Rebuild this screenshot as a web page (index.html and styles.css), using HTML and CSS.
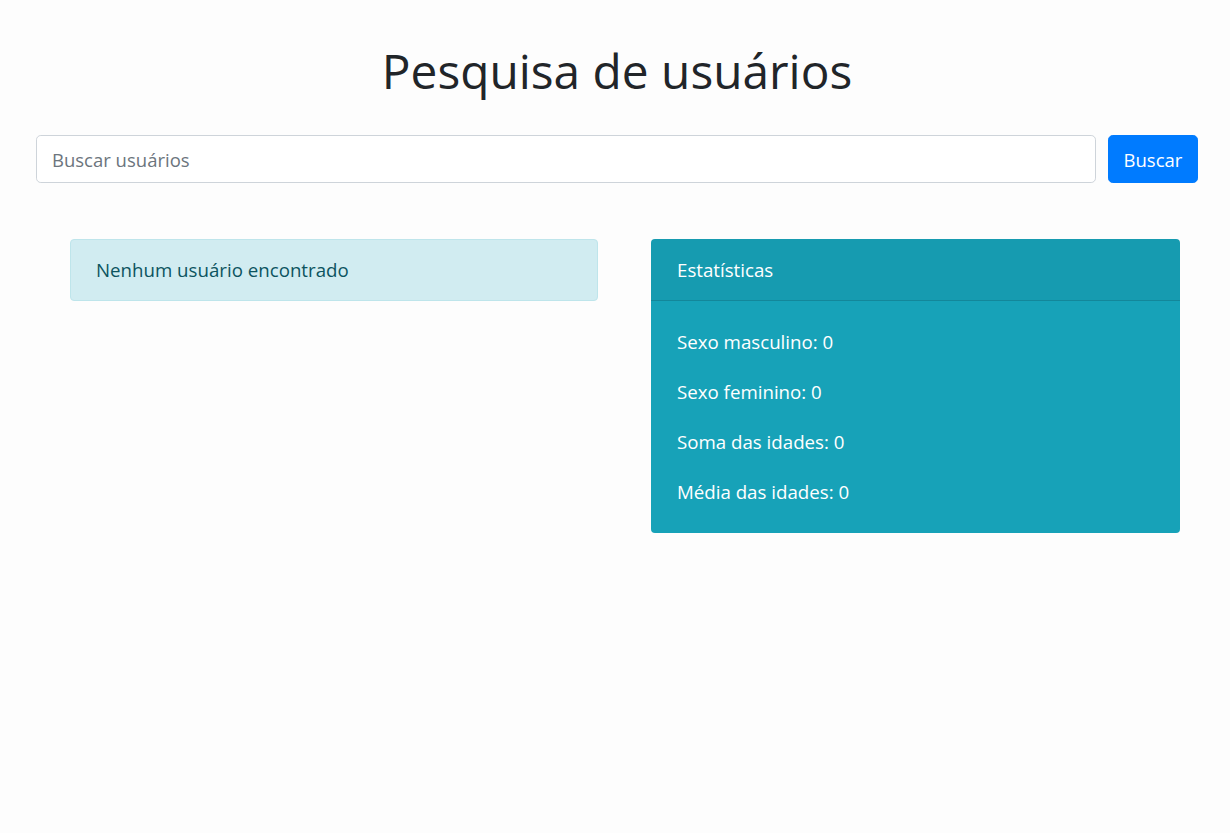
FILE: index.html
```html
<!DOCTYPE html>
<html lang="pt-BR">
<head>
<meta charset="utf-8">
<title>Pesquisa de usuários</title>
<link rel="stylesheet" href="styles.css">
</head>
<body>
<div class="page">
  <h1 class="title">Pesquisa de usuários</h1>
  <form class="search" onsubmit="return false">
    <input class="search-input" type="text" placeholder="Buscar usuários">
    <button class="search-btn" type="submit">Buscar</button>
  </form>
  <div class="results">
    <div class="col">
      <div class="alert">Nenhum usuário encontrado</div>
    </div>
    <div class="col">
      <div class="card">
        <div class="card-header">Estatísticas</div>
        <div class="card-body">
          <p>Sexo masculino: 0</p>
          <p>Sexo feminino: 0</p>
          <p>Soma das idades: 0</p>
          <p>Média das idades: 0</p>
        </div>
      </div>
    </div>
  </div>
</div>
</body>
</html>
```

FILE: styles.css
```css
* { box-sizing: border-box; }
html, body { margin: 0; padding: 0; }
body {
  background: #fdfdfd;
  color: #212529;
  font-family: "Open Sans", "Noto Sans", sans-serif;
  font-size: 16px;
  line-height: 1.5;
}
.page {
  padding: 36px 32px 0 36px;
}
.title {
  margin: 0 0 30px;
  text-align: center;
  font-size: 47.8px;
  font-weight: 500;
  line-height: 69px;
  color: #212529;
}
.search {
  display: flex;
  gap: 12px;
  margin: 0;
}
.search-input {
  flex: 1;
  height: 48px;
  padding: 8px 15px;
  font-family: inherit;
  font-size: 18.5px;
  color: #495057;
  background: #fff;
  border: 1px solid #ced4da;
  border-radius: 4.8px;
  outline: none;
}
.search-input::placeholder { color: #6c757d; }
.search-btn {
  width: 90px;
  height: 48px;
  padding: 0;
  font-family: inherit;
  font-size: 18.5px;
  color: #fff;
  background: #007bff;
  border: 1px solid #007bff;
  border-radius: 4.8px;
}
.results {
  display: grid;
  grid-template-columns: 528fr 529fr;
  gap: 53px;
  margin: 56px 18px 0 34px;
  align-items: start;
}
.col { min-width: 0; }
.alert {
  padding: 15px 25px;
  font-size: 18.7px;
  line-height: 30px;
  color: #0c5460;
  background: #d1ecf1;
  border: 1px solid #bee5eb;
  border-radius: 4px;
}
.card {
  background: #17a2b8;
  color: #fff;
  border-radius: 4px;
  overflow: hidden;
}
.card-header {
  padding: 16px 26px 15px;
  font-size: 18.7px;
  line-height: 30px;
  background: rgba(0, 0, 0, 0.04);
  border-bottom: 1px solid rgba(0, 0, 0, 0.125);
}
.card-body {
  padding: 26px 26px 26px;
  font-size: 18.7px;
  line-height: 30px;
}
.card-body p { margin: 0 0 20px; }
.card-body p:last-child { margin-bottom: 0; }
```
